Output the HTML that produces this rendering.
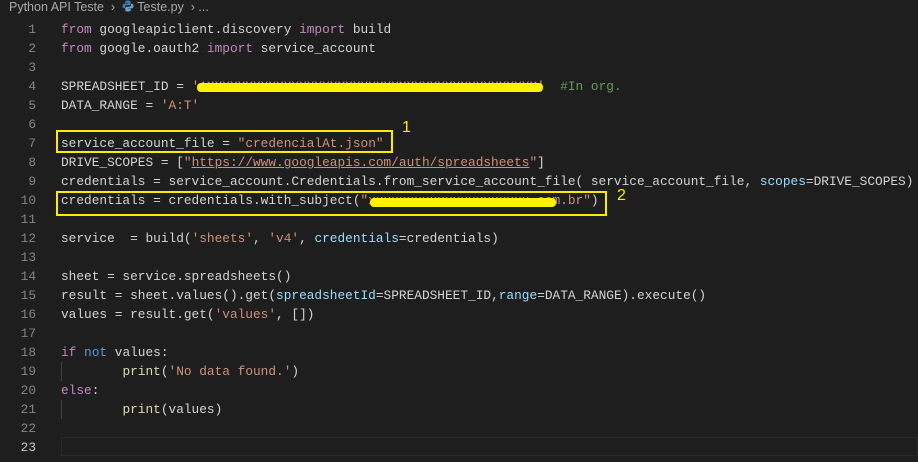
<!DOCTYPE html>
<html><head><meta charset="utf-8"><style>
body{margin:0;width:918px;height:462px;background:#1e1e1e;overflow:hidden;position:relative;font-family:"Liberation Mono",monospace;}
.bc{position:absolute;left:9px;top:0;height:19px;line-height:19px;font:12.5px "Liberation Sans",sans-serif;color:#a9a9a9;white-space:nowrap}
.ln{position:absolute;left:0;width:36px;text-align:right;color:#858585;font-size:12.8px;line-height:19px}
.cd{position:absolute;left:61px;color:#d4d4d4;font-size:12.8px;line-height:19px;white-space:pre}
.k{color:#c586c0}.s{color:#ce9178}.f{color:#dcdcaa}.v{color:#9cdcfe}.b{color:#569cd6}.c{color:#6a9955}
.u{text-decoration:underline}
.box{position:absolute;border:2px solid #ffea00;box-sizing:border-box}
.hl{position:absolute;background:#fff200;border-radius:4px}
.lab{position:absolute;color:#ffea00;font:16px "Liberation Sans",sans-serif}
.guide{position:absolute;left:61px;width:1px;background:#404040}
</style></head><body>
<div class="bc">Python API Teste &nbsp;›&nbsp; <svg width="12" height="12" viewBox="0 0 12 12" style="vertical-align:-1px"><path d="M6 0.5C3 0.5 3.2 1.8 3.2 1.8V3.2H6.1V3.6H2C0.5 3.6 0.5 5.5 0.5 6.2 0.5 7.8 1.6 8.3 2 8.3H3V6.9C3 6 3.8 5.3 4.6 5.3H7.4C8.1 5.3 8.7 4.7 8.7 4V1.8C8.7 1 8 0.5 6 0.5Z" fill="#3c78aa"/><path d="M6 11.5C9 11.5 8.8 10.2 8.8 10.2V8.8H5.9V8.4H10C11.5 8.4 11.5 6.5 11.5 5.8 11.5 4.2 10.4 3.7 10 3.7H9V5.1C9 6 8.2 6.7 7.4 6.7H4.6C3.9 6.7 3.3 7.3 3.3 8V10.2C3.3 11 4 11.5 6 11.5Z" fill="#6a9fd0"/></svg> Teste.py &nbsp;›&nbsp;...</div>

<div style="position:absolute;left:61px;top:437px;width:857px;height:19px;border:1px solid #282828;box-sizing:border-box"></div>
<div class="guide" style="top:362px;height:19px"></div>
<div class="guide" style="top:400px;height:19px"></div>

<div class="ln" style="top:20px">1</div><div class="cd" style="top:20px"><span class="k">from</span> googleapiclient.discovery <span class="k">import</span> build</div>
<div class="ln" style="top:39px">2</div><div class="cd" style="top:39px"><span class="k">from</span> google.oauth2 <span class="k">import</span> service_account</div>
<div class="ln" style="top:58px">3</div>
<div class="ln" style="top:77px">4</div><div class="cd" style="top:77px">SPREADSHEET_ID = <span class="s">'1XXXXXXXXXXXXXXXXXXXXXXXXXXXXXXXXXXXXXXXXXXX'</span>  <span class="c">#In org.</span></div>
<div class="ln" style="top:96px">5</div><div class="cd" style="top:96px">DATA_RANGE = <span class="s">'A:T'</span></div>
<div class="ln" style="top:115px">6</div>
<div class="ln" style="top:134px">7</div><div class="cd" style="top:134px">service_account_file = <span class="s">"credencialAt.json"</span></div>
<div class="ln" style="top:153px">8</div><div class="cd" style="top:153px">DRIVE_SCOPES = [<span class="s">"<span class="u">https://www.googleapis.com/auth/spreadsheets</span>"</span>]</div>
<div class="ln" style="top:172px">9</div><div class="cd" style="top:172px">credentials = service_account.Credentials.from_service_account_file( service_account_file, <span class="v">scopes</span>=DRIVE_SCOPES)</div>
<div class="ln" style="top:191px">10</div><div class="cd" style="top:191px">credentials = credentials.with_subject(<span class="s">"xxxxxxxxxxxxxxxxxxxxx.com.br"</span>)</div>
<div class="ln" style="top:210px">11</div>
<div class="ln" style="top:229px">12</div><div class="cd" style="top:229px">service  = build(<span class="s">'sheets'</span>, <span class="s">'v4'</span>, <span class="v">credentials</span>=credentials)</div>
<div class="ln" style="top:248px">13</div>
<div class="ln" style="top:267px">14</div><div class="cd" style="top:267px">sheet = service.spreadsheets()</div>
<div class="ln" style="top:286px">15</div><div class="cd" style="top:286px">result = sheet.values().get(<span class="v">spreadsheetId</span>=SPREADSHEET_ID,<span class="v">range</span>=DATA_RANGE).execute()</div>
<div class="ln" style="top:305px">16</div><div class="cd" style="top:305px">values = result.get(<span class="s">'values'</span>, [])</div>
<div class="ln" style="top:324px">17</div>
<div class="ln" style="top:343px">18</div><div class="cd" style="top:343px"><span class="k">if</span> <span class="b">not</span> values:</div>
<div class="ln" style="top:362px">19</div><div class="cd" style="top:362px">        <span class="f">print</span>(<span class="s">'No data found.'</span>)</div>
<div class="ln" style="top:381px">20</div><div class="cd" style="top:381px"><span class="k">else</span>:</div>
<div class="ln" style="top:400px">21</div><div class="cd" style="top:400px">        <span class="f">print</span>(values)</div>
<div class="ln" style="top:419px">22</div>
<div class="ln" style="top:438px;color:#c6c6c6">23</div>

<div class="hl" style="left:197px;top:83px;width:346px;height:9px"></div>
<div class="hl" style="left:370px;top:198px;width:186px;height:9px"></div>
<div class="box" style="left:56px;top:130px;width:337px;height:23px"></div>
<div class="box" style="left:56px;top:191px;width:551px;height:25px"></div>
<div class="lab" style="left:402px;top:119px">1</div>
<div class="lab" style="left:617px;top:187px">2</div>
</body></html>
